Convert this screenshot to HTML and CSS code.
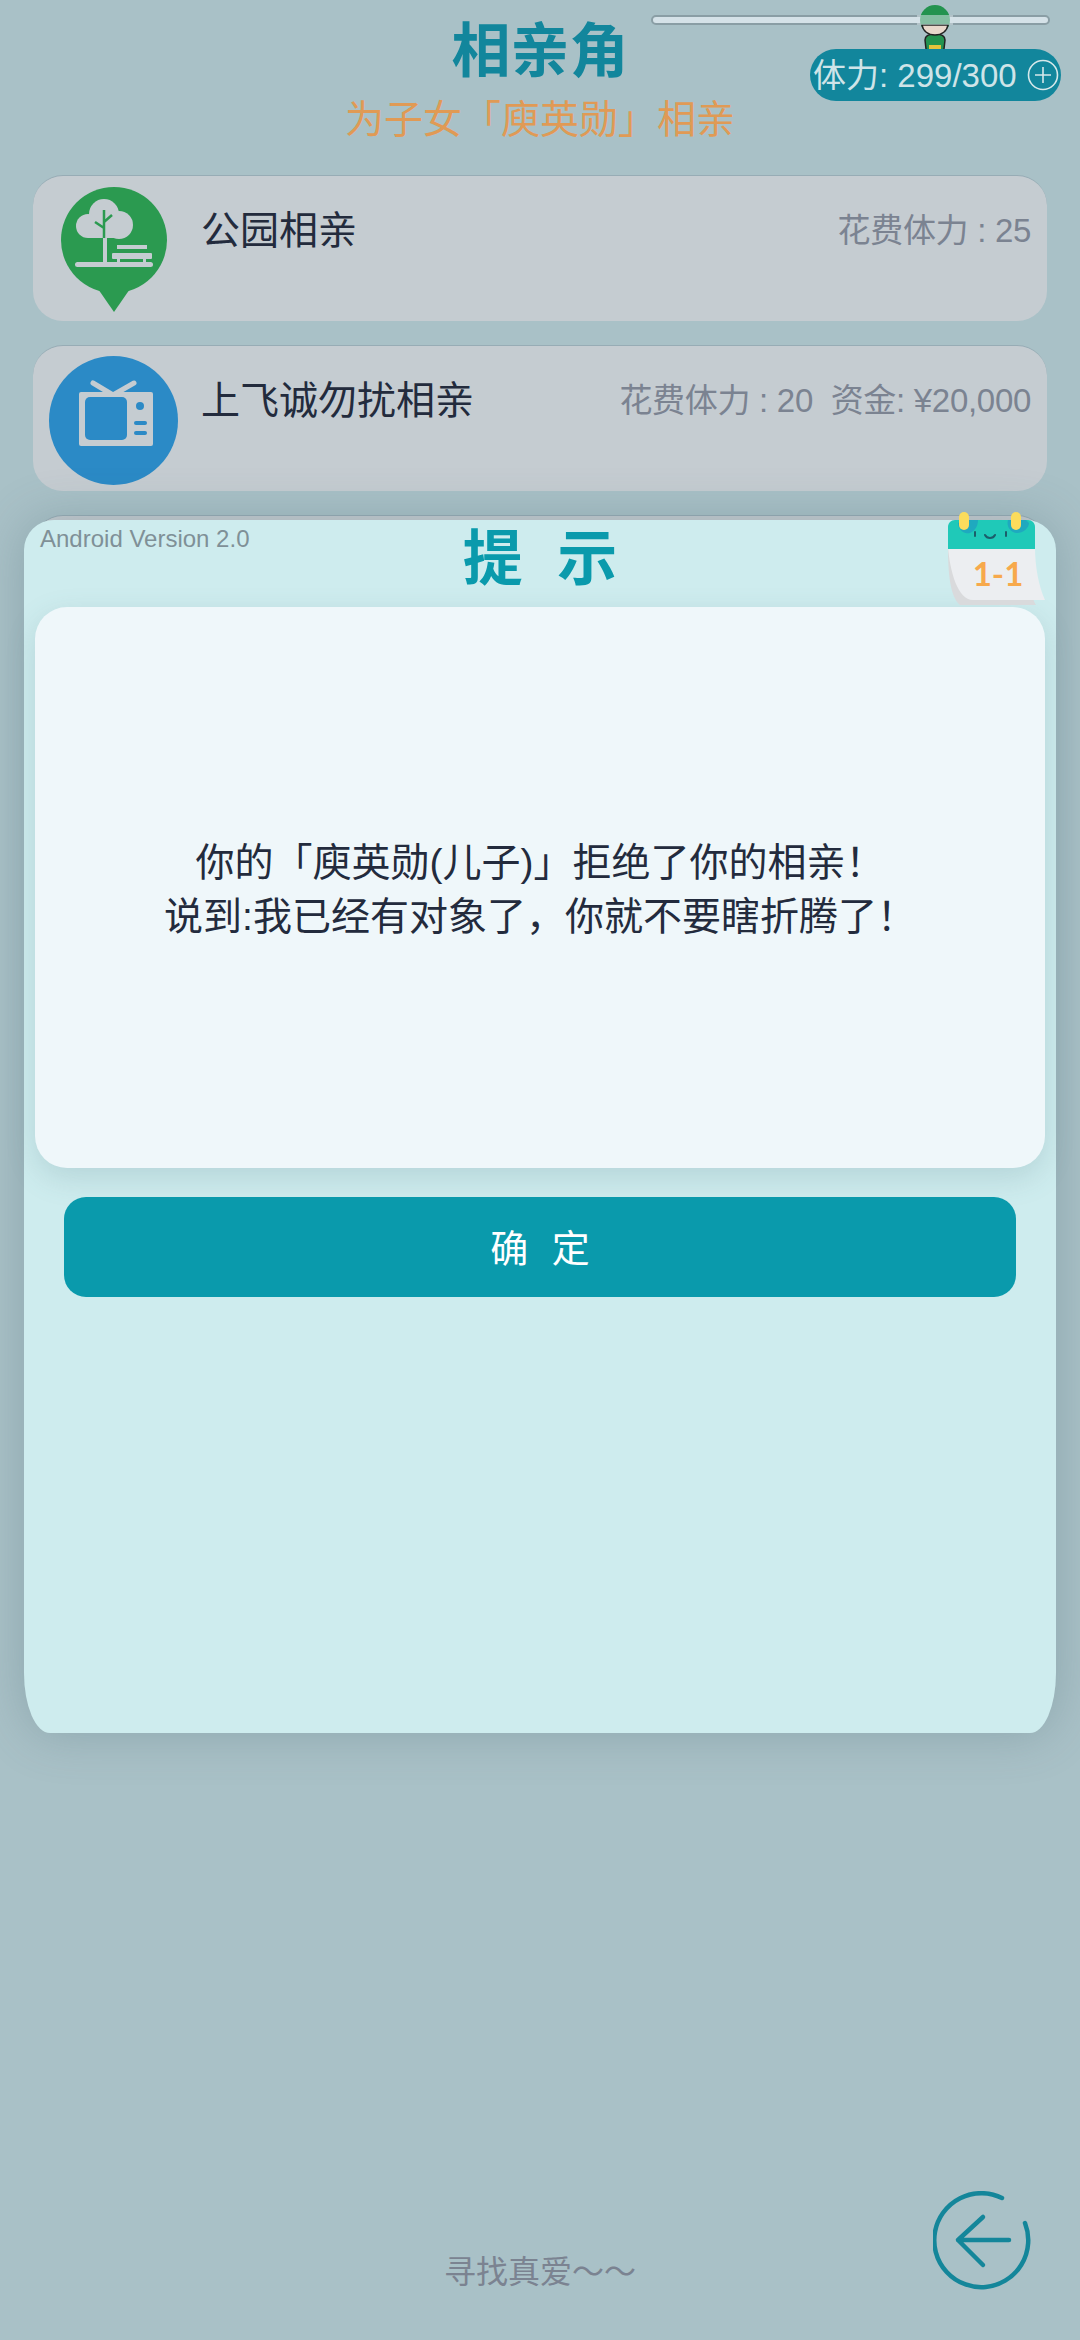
FILE: index.html
```html
<!DOCTYPE html>
<html lang="zh">
<head>
    <meta charset="UTF-8">
    <meta name="viewport" content="width=device-width, initial-scale=1.0">
    <title>相亲角</title>
    <link rel="stylesheet" href="styles.css">
</head>
<body>
    <div class="screen">
        <!-- 顶部 -->
        <header class="top">
            <h1>相亲角</h1>
            <p class="subtitle">为子女「庾英勋」相亲</p>
            <div class="progress">
                <svg class="runner" viewBox="0 0 36 48">
                    <path d="M8 36c0-4 4-6 10-6s10 2 10 6l-1 9c-2 2-16 2-18 0z" fill="#23934f" stroke="#222" stroke-width="1.500"/>
                    <rect x="12" y="41" width="12" height="4" fill="#e5c33c"/>
                    <circle cx="18" cy="16" r="15" fill="#23934f"/>
                    <path d="M5 21h26c-1 6-6 10-13 10S6 27 5 21z" fill="#e8d8cb" stroke="#222" stroke-width="1.500"/>
                </svg>
                <span class="progress-glass"></span>
            </div>
            <div class="stamina">
                <span>体力: 299/300</span>
                <svg class="plus" viewBox="0 0 32 32">
                    <circle cx="16" cy="16" r="14.500" fill="none" stroke="#d6e8ea" stroke-width="1.600"/>
                    <path d="M16 8v16M8 16h16" stroke="#d6e8ea" stroke-width="1.600"/>
                </svg>
            </div>
        </header>

        <!-- 相亲方式 -->
        <section class="list">
            <div class="item">
                <svg class="item-icon" viewBox="0 0 130 130">
                    <circle cx="65" cy="54" r="53" fill="#2b9a50"/>
                    <path d="M47 100L65 126L83 100z" fill="#2b9a50"/>
                    <g fill="#c5ccd1">
                        <circle cx="55" cy="28" r="15"/>
                        <circle cx="39" cy="40" r="12"/>
                        <circle cx="70" cy="39" r="14"/>
                        <rect x="39" y="34" width="31" height="18"/>
                        <rect x="54" y="50" width="4" height="28"/>
                        <rect x="26" y="76" width="78" height="5" rx="2.500"/>
                        <rect x="68" y="59" width="30" height="4"/>
                        <rect x="63" y="67" width="40" height="6" rx="1"/>
                        <rect x="68" y="73" width="3" height="4"/>
                        <rect x="94" y="73" width="3" height="4"/>
                    </g>
                    <path d="M55 24V52M55 42l-9-6M55 36l8-7" stroke="#2b9a50" stroke-width="2.500" fill="none"/>
                </svg>
                <span class="item-name">公园相亲</span>
                <span class="item-cost">花费体力 : 25</span>
            </div>
            <div class="item">
                <svg class="item-icon" viewBox="0 0 130 130">
                    <circle cx="64.500" cy="64.500" r="64.500" fill="#2b8ac6"/>
                    <path d="M44 27l20 12 21-12" stroke="#c5ccd1" stroke-width="5" stroke-linecap="round" fill="none"/>
                    <rect x="30" y="36" width="74" height="54" rx="2" fill="#c5ccd1"/>
                    <rect x="36" y="41" width="42" height="43" rx="5" fill="#2b8ac6"/>
                    <circle cx="91" cy="50" r="4" fill="#2b8ac6"/>
                    <rect x="85" y="65" width="13" height="4" rx="2" fill="#2b8ac6"/>
                    <rect x="85" y="75" width="13" height="4" rx="2" fill="#2b8ac6"/>
                </svg>
                <span class="item-name">上飞诚勿扰相亲</span>
                <span class="item-cost">花费体力 : 20&nbsp;&nbsp;资金: ¥20,000</span>
            </div>
            <div class="item"></div>
        </section>

        <footer class="bottom">
            <span class="slogan">寻找真爱～～</span>
            <svg class="back" viewBox="0 0 100 100">
                <path d="M69 7A47 47 0 1 0 92 32" fill="none" stroke="#14869a" stroke-width="4.500" stroke-linecap="round"/>
                <path d="M50 26L25 49l25 25M25 49h51" fill="none" stroke="#14869a" stroke-width="4.500" stroke-linecap="round" stroke-linejoin="round"/>
            </svg>
        </footer>

        <!-- 提示弹窗 -->
        <div class="dialog">
            <span class="version">Android Version 2.0</span>
            <h2>提 示</h2>
            <div class="dialog-body">
                <p>你的「庾英勋(儿子)」拒绝了你的相亲！<br>说到:我已经有对象了，你就不要瞎折腾了！</p>
            </div>
            <button class="btn">确 定</button>
            <div class="calendar">
                <svg viewBox="0 0 100 100">
                    <path d="M5 35c0 25 2 50 12 58h76c-4-6-10-30-13-58z" fill="#d9dadc"/>
                    <path d="M5 35h87c0 20 4 40 10 53H30C15 88 7 60 5 35z" fill="#eceef1"/>
                    <path d="M5 15c0-4 3-7 7-7h73c4 0 7 3 7 7v22H5z" fill="#1fc9b8"/>
                    <path d="M27 21a10 10 0 0 1-12-10l6-3h14c0 6-3 11-8 13zM74 21a10 10 0 0 1-9-13h18l3 3c0 5-6 10-12 10z" fill="#1fa9bf"/>
                    <rect x="16" y="0" width="10" height="18" rx="5" fill="#fbdc5c"/>
                    <rect x="68" y="0" width="10" height="18" rx="5" fill="#fbdc5c"/>
                    <path d="M32 20v4M63 20v4" stroke="#1b5e6b" stroke-width="2" stroke-linecap="round"/>
                    <path d="M42 23c2 4 8 4 10 0" stroke="#1b5e6b" stroke-width="2" fill="none" stroke-linecap="round"/>
                </svg>
                <span class="calendar-date">1-1</span>
            </div>
        </div>
    </div>
</body>
</html>
```

FILE: styles.css
```css
:root {
    --teal: #0a9aac;
    --teal-dark: #12869c;
    --orange: #e09a55;
    --text-color: #232b3d;
    --gray-text: #7b8391;
    --cjk: "Liberation Sans", "Noto Sans CJK SC", sans-serif;
}

* {
    box-sizing: border-box;
    margin: 0;
    padding: 0;
}

body {
    font-family: var(--cjk);
    color: var(--text-color);
    background-color: #a9c1c7;
}

.screen {
    position: relative;
    width: 1080px;
    height: 2340px;
    overflow: hidden;
    display: flex;
    flex-direction: column;
    background-color: #a9c1c7;
}

/* 顶部 */
.top {
    position: relative;
    height: 175px;
    padding-top: 15px;
    text-align: center;
}

h1 {
    font-size: 59px;
    line-height: 74px;
    font-weight: 700;
    color: var(--teal-dark);
}

.subtitle {
    font-size: 39px;
    line-height: 46px;
    margin-top: 8px;
    color: var(--orange);
}

.progress {
    position: absolute;
    left: 651px;
    top: 15px;
    width: 399px;
    height: 10px;
    border: 2px solid #8a9ea5;
    border-radius: 5px;
    background-color: #d5e2e8;
}

.runner {
    position: absolute;
    left: 264px;
    top: -13px;
    width: 36px;
    height: 48px;
}

.progress-glass {
    position: absolute;
    left: 264px;
    top: -2px;
    width: 36px;
    height: 10px;
    background-color: rgba(213, 226, 232, 0.55);
}

.stamina {
    position: absolute;
    left: 810px;
    top: 49px;
    width: 251px;
    height: 52px;
    padding: 0 2px 4px 3px;
    display: flex;
    align-items: center;
    justify-content: space-between;
    border-radius: 26px;
    background-color: #12869c;
    color: #cfe4e8;
    font-size: 33px;
    white-space: nowrap;
}

.plus {
    width: 32px;
    height: 32px;
    flex-shrink: 0;
    margin-top: 4px;
}

/* 相亲方式 */
.list {
    display: flex;
    flex-direction: column;
    gap: 24px;
    padding: 0 33px;
}

.item {
    position: relative;
    height: 146px;
    padding: 33px 16px 0 168px;
    display: flex;
    justify-content: space-between;
    border-radius: 30px;
    background-color: #c5ccd1;
    border-top: 1px solid #97acb5;
}

.item-icon {
    position: absolute;
    left: 16px;
    top: 10px;
    width: 130px;
    height: 130px;
}

.item-name {
    font-size: 39px;
    line-height: 44px;
}

.item-cost {
    font-size: 33px;
    line-height: 44px;
    letter-spacing: -0.3px;
    color: var(--gray-text);
}

/* 底部 */
.bottom {
    position: absolute;
    left: 0;
    right: 0;
    bottom: 0;
    height: 150px;
}

.slogan {
    display: block;
    padding-top: 62px;
    text-align: center;
    font-size: 32px;
    line-height: 40px;
    color: var(--gray-text);
}

.back {
    position: absolute;
    left: 933px;
    top: 1px;
    width: 100px;
    height: 100px;
}

/* 提示弹窗 */
.dialog {
    position: absolute;
    left: 24px;
    top: 520px;
    width: 1032px;
    height: 1213px;
    padding: 0 11px;
    border-radius: 30px 30px 26px 26px / 30px 30px 60px 60px;
    background-color: #ceecee;
    box-shadow: 0 0 50px rgba(70, 100, 110, 0.3);
}

.version {
    position: absolute;
    left: 16px;
    top: 5px;
    font-size: 24px;
    color: #7f9097;
}

h2 {
    height: 87px;
    font-size: 60px;
    line-height: 80px;
    text-align: center;
    font-weight: 700;
    word-spacing: 18px;
    color: var(--teal);
}

.dialog-body {
    height: 561px;
    display: flex;
    align-items: center;
    justify-content: center;
    border-radius: 32px;
    background-color: #eff7fa;
    box-shadow: 0 10px 30px rgba(80, 120, 130, 0.2);
}

.dialog-body p {
    margin-top: 5px;
    font-size: 39px;
    line-height: 54px;
    text-align: center;
}

.btn {
    display: block;
    width: 952px;
    height: 100px;
    margin: 29px auto 0;
    padding-bottom: 4px;
    border: none;
    border-radius: 22px;
    font-family: var(--cjk);
    font-size: 38px;
    word-spacing: 13px;
    color: #fff;
    background-color: var(--teal);
}

.calendar {
    position: absolute;
    left: 919px;
    top: -8px;
    width: 100px;
    height: 100px;
}

.calendar svg {
    width: 100px;
    height: 100px;
    overflow: visible;
}

.calendar-date {
    position: absolute;
    left: 10px;
    right: 0;
    top: 41px;
    text-align: center;
    font-family: Lato, var(--cjk);
    font-size: 33px;
    line-height: 40px;
    font-weight: 700;
    color: #f7a94c;
}
```
